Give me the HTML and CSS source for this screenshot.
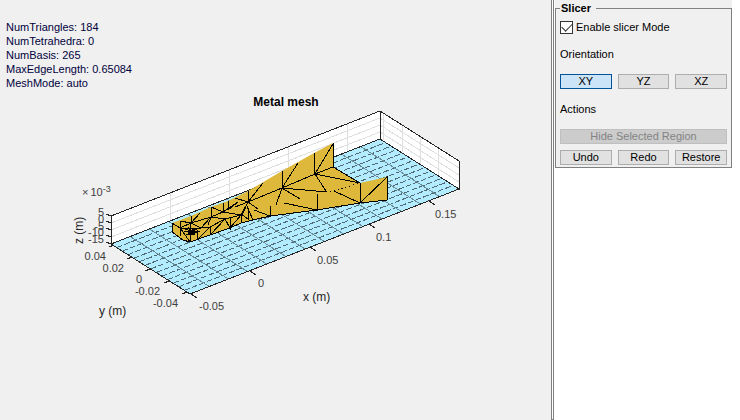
FILE: index.html
```html
<!DOCTYPE html>
<html lang="en">
<head>
    <meta charset="UTF-8">
    <meta name="viewport" content="width=device-width, initial-scale=1.0">
    <title>Metal mesh</title>
    <link rel="stylesheet" href="styles.css">
</head>
<body>

    <main class="figure">
        <ul class="mesh-info">
            <li>NumTriangles: 184</li>
            <li>NumTetrahedra: 0</li>
            <li>NumBasis: 265</li>
            <li>MaxEdgeLength: 0.65084</li>
            <li>MeshMode: auto</li>
        </ul>

        <svg class="plot" viewBox="0 92 551 228" role="img" aria-label="Metal mesh">
            <text class="plot-title" x="286" y="106">Metal mesh</text>

            <!-- back walls -->
            <path class="wall" d="M111 244V216L380 111L459 161V189L380 139Z"/>
            <path class="wall-grid" d="M111 223L380 118L459 168M111 230L380 125L459 175M111 237L380 132L459 182"/>
            <path class="wall-grid" d="M170 193V221M229 170V198M288 147V175M347 124V152M383 112V140M402 124V152M420 136V164M438 147V175"/>

            <!-- slicing plane, 14 x 14 cells -->
            <path class="plane" d="M111 244L380 139L459 189L190 294Z"/>
            <g transform="matrix(19.2 -7.5 5.64 3.57 111 244)">
                <path class="plane-grid dashed" d="M0 1H14M0 2H14M0 3H14M0 4H14M0 5H14M0 6H14M0 7H14M0 8H14M0 9H14M0 10H14M0 11H14M0 12H14M0 13H14"/>
                <path class="plane-grid" d="M1 0V14M2 0V14M3 0V14M4 0V14M5 0V14M6 0V14M7 0V14M8 0V14M9 0V14M10 0V14M11 0V14M12 0V14M13 0V14"/>
            </g>

            <!-- box edges and ticks -->
            <path class="axis" d="M111 244V216L380 111L459 161V189L380 139V111M111 244L380 139M111 244L190 294L459 189"/>
            <path class="axis" d="M111 216L106 214M111 223L106 221M111 230L106 228M111 237L106 235M111 244L106 242"/>
            <path class="axis" d="M114 245L109 247M132 257L127 259M150 269L145 271M169 281L164 283M187 292L182 294"/>
            <path class="axis" d="M191 294L197 298M250 271L256 275M310 247L316 251M369 224L375 228M429 201L435 205"/>

            <!-- mesh -->
            <path class="metal" d="M172 223L191 216L211 207L228 201L248 191L282 171L314 153L333 143V167L360 183L387 177V200L360 203L317 210L270 216L253 220L241 223L230 228L210 235L190 242L183 240L172 232Z"/>
            <path class="edge" d="M333 143V167L360 183V203L387 177V200L360 203L317 210L270 216L253 220L241 223L230 228L210 235L190 242L183 240L172 232V223"/>
            <path class="edge" d="M235 207L248 202L282 188L315 174L333 167M248 191V202M282 171V188M314 153L315 174L333 144M298 163L282 188M263 183L248 202"/>
            <path class="edge" d="M282 188L276 205M282 188L300 199M282 188L327 192M315 174L326 191M315 174L360 183M334 191L360 203M284 203L317 210V194M248 202L258 209M254 210L270 216V206M248 202L242 215M248 202L235 198"/>
            <path class="edge-dotted" d="M330 192L360 183"/>
            <path class="edge" d="M172 223L180 228L201 228L210 227L225 219L241 215M180 221V236M191 216V223M191 223L211 217L223 212L238 202M211 207V217M223 203V212M228 201V210L238 202"/>
            <path class="edge" d="M191 223L201 228L211 217L225 219L230 228V218M223 212L241 215V223M230 228L241 215M248 202L241 215M210 227V235L225 219M197 230V240L210 227M190 232V242M181 229L190 242M211 217L208 225M200 213L191 223L180 221M191 223L180 228M223 212L211 207M248 211V219L241 214M253 220L246 204"/>
            <path class="edge" d="M185 229L198 233M186 235L199 228M191 224L190 236M184 231H200M188 227L194 235"/>
            <path class="edge-dense" d="M188 233H195M192 230H195"/>

            <!-- labels -->
            <g class="tick-label z-label">
                <text x="104" y="216">5</text>
                <text x="104" y="223">0</text>
                <text x="104" y="230">-5</text>
                <text x="104" y="236">-10</text>
                <text x="104" y="243">-15</text>
            </g>
            <g class="tick-label y-label">
                <text x="106" y="260">0.04</text>
                <text x="124" y="272">0.02</text>
                <text x="142" y="283">0</text>
                <text x="160" y="295">-0.02</text>
                <text x="178" y="307">-0.04</text>
            </g>
            <g class="tick-label">
                <text x="199" y="310">-0.05</text>
                <text x="258" y="287">0</text>
                <text x="317" y="264">0.05</text>
                <text x="376" y="241">0.1</text>
                <text x="435" y="218">0.15</text>
            </g>
            <text class="tick-label" x="82" y="196">×<tspan dx="2">10</tspan><tspan class="exponent" dy="-4">-3</tspan></text>
            <text class="axis-label" x="303" y="301">x (m)</text>
            <text class="axis-label" x="99" y="315">y (m)</text>
            <text class="axis-label" transform="translate(83 244) rotate(-90)">z (m)</text>
        </svg>
    </main>

    <div class="splitter"></div>

    <aside class="sidebar">
        <form class="panel">
            <fieldset class="slicer">
                <legend>Slicer</legend>
                <label class="check-row" for="slicerMode">
                    <input type="checkbox" id="slicerMode" checked>
                    Enable slicer Mode
                </label>

                <p class="group-title" id="orientation">Orientation</p>
                <div class="button-row" role="group" aria-labelledby="orientation">
                    <button type="button" class="selected" aria-pressed="true">XY</button>
                    <button type="button" aria-pressed="false">YZ</button>
                    <button type="button" aria-pressed="false">XZ</button>
                </div>

                <p class="group-title" id="actions">Actions</p>
                <div class="button-row" role="group" aria-labelledby="actions">
                    <button type="button" class="wide" disabled>Hide Selected Region</button>
                    <button type="button">Undo</button>
                    <button type="button">Redo</button>
                    <button type="button">Restore</button>
                </div>
            </fieldset>
        </form>
    </aside>

</body>
</html>
```
FILE: styles.css
```css
* {
    box-sizing: border-box;
}
body {
    display: flex;
    min-height: 100vh;
    margin: 0;
    background-color: #fff;
    color: #000;
    font-family: "Liberation Sans", Arial, sans-serif;
    font-size: 11px;
    line-height: 14px;
}
.figure {
    flex: 1;
    min-width: 0;
    background-color: #f0f0f0;
}
.mesh-info {
    list-style: none;
    margin: 0;
    padding: 20px 6px 2px;
    color: #00003c;
}
.plot {
    display: block;
    width: 100%;
}
.plot-title {
    font-size: 12px;
    font-weight: bold;
    text-anchor: middle;
}
.wall {
    fill: #fff;
}
.wall-grid {
    fill: none;
    stroke: #dfdfdf;
    shape-rendering: crispEdges;
}
.plane {
    fill: #b3ecff;
}
.plane-grid {
    fill: none;
    stroke: #6b8d99;
    vector-effect: non-scaling-stroke;
    shape-rendering: crispEdges;
}
.plane-grid.dashed {
    stroke: #4f6a74;
    stroke-dasharray: 6 2;
}
.axis {
    fill: none;
    stroke: #262626;
    shape-rendering: crispEdges;
}
.metal {
    fill: #deb83a;
}
.edge, .edge-dotted, .edge-dense {
    fill: none;
    stroke: #000;
    shape-rendering: crispEdges;
}
.edge-dotted {
    stroke-dasharray: 1 3;
}
.edge-dense {
    stroke-width: 3px;
}
.tick-label {
    fill: #404040;
    font-size: 11px;
}
.z-label, .y-label {
    text-anchor: end;
}
.exponent {
    font-size: 9px;
}
.axis-label {
    fill: #262626;
    font-size: 12px;
}
.splitter {
    width: 3px;
    border: 1px solid #808080;
    border-top: none;
}
.sidebar {
    width: 186px;
    padding: 0 8px 0 1px;
}
.panel {
    background-color: #f0f0f0;
}
.slicer {
    min-width: 0;
    margin: 0;
    padding: 4px 4px 2px;
    border: 1px solid #808080;
}
.slicer legend {
    padding: 0 5px 0 1px;
    font-weight: bold;
    line-height: 16px;
}
.check-row {
    display: flex;
    align-items: center;
    gap: 3px;
    height: 14px;
}
.check-row input {
    display: grid;
    place-items: center;
    width: 13px;
    height: 13px;
    margin: 0;
    border: 1px solid #333;
    background-color: #fff;
    appearance: none;
}
.check-row input:checked::after {
    content: "";
    width: 9px;
    height: 5px;
    margin-bottom: 3px;
    border: solid #333;
    border-width: 0 0 1px 1px;
    transform: rotate(-45deg);
}
.group-title {
    margin: 13px 0;
}
.button-row {
    display: grid;
    grid-template-columns: repeat(3, 1fr);
    gap: 6px;
}
button {
    height: 15px;
    padding: 0;
    border: 1px solid #adadad;
    background-color: #e1e1e1;
    color: #000;
    font: inherit;
    line-height: 13px;
}
button:hover {
    border-color: #0078d7;
}
button.selected {
    border-color: #005499;
    background-color: #cce4f7;
}
button:disabled {
    border-color: #bfbfbf;
    background-color: #ccc;
    color: #838383;
}
.wide {
    grid-column: 1 / -1;
}
```
